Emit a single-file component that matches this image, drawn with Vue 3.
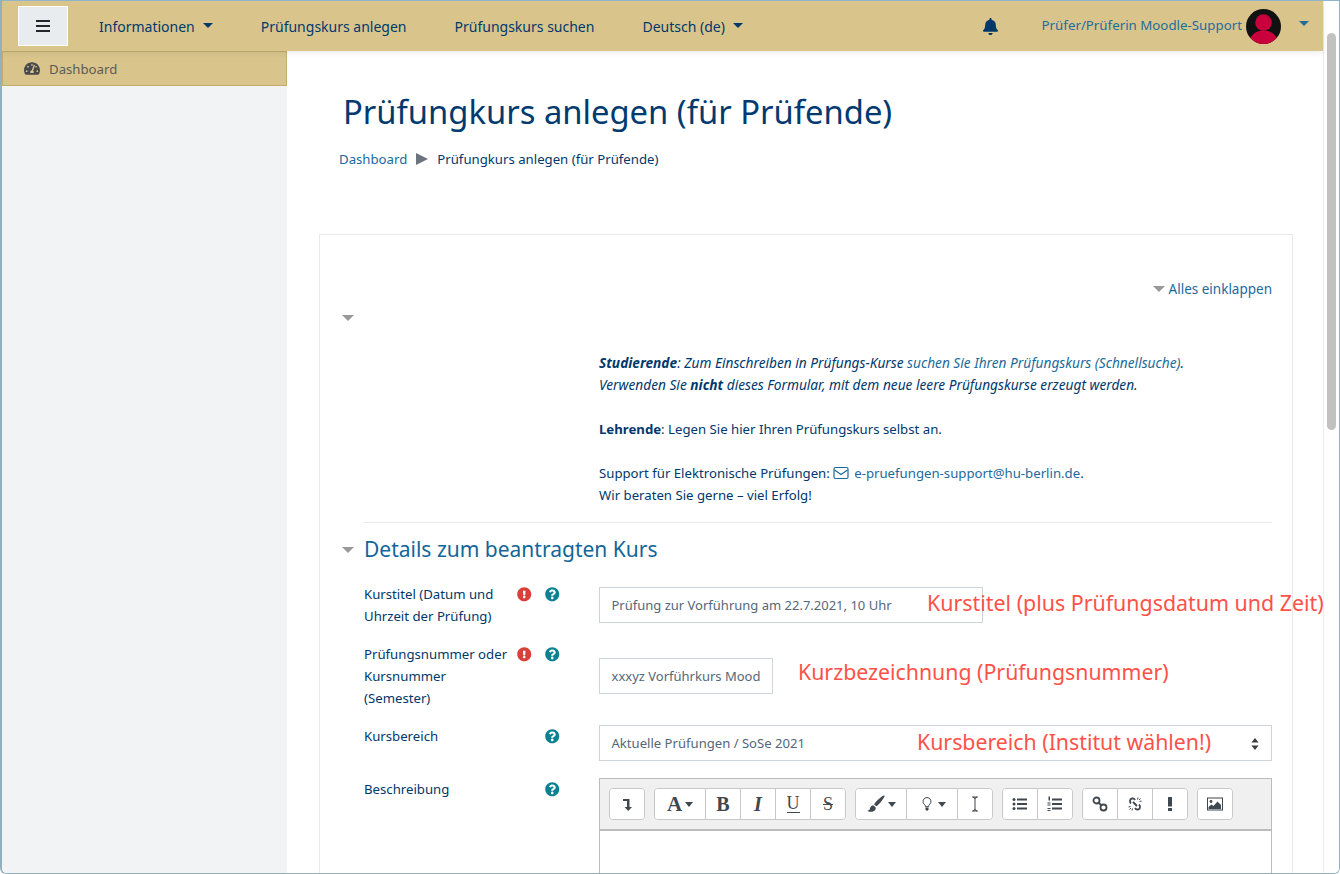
<template>
  <div class="window">
    <div class="page">
      <header class="navbar">
        <button class="burger" type="button" aria-label="Menu">
          <span></span><span></span><span></span>
        </button>
        <a class="nav-item first">Informationen<i class="caret"></i></a>
        <a class="nav-item">Prüfungskurs anlegen</a>
        <a class="nav-item">Prüfungskurs suchen</a>
        <a class="nav-item">Deutsch (de)<i class="caret"></i></a>
        <div class="nav-right">
          <svg class="bell" viewBox="0 0 448 512"><path d="M224 512c35.32 0 63.97-28.65 63.97-64H160.03c0 35.35 28.65 64 63.97 64zm215.39-149.71c-19.32-20.76-55.47-51.99-55.47-154.29 0-77.7-54.48-139.9-127.94-155.16V32c0-17.67-14.32-32-31.98-32s-31.98 14.33-31.98 32v20.84C118.56 68.1 64.08 130.3 64.08 208c0 102.3-36.15 133.53-55.47 154.29-6 6.45-8.66 14.16-8.61 21.71.11 16.4 12.98 32 32.1 32h383.8c19.12 0 32-15.6 32.1-32 .05-7.55-2.61-15.27-8.61-21.71z"/></svg>
          <a class="user-name">Prüfer/Prüferin Moodle-Support</a>
          <svg class="avatar" viewBox="0 0 36 36">
            <defs><clipPath id="av"><circle cx="18" cy="18" r="18"/></clipPath></defs>
            <circle cx="18" cy="18" r="18" fill="#111"/>
            <g clip-path="url(#av)" fill="#c8003c">
              <circle cx="18" cy="14" r="8.5"/>
              <path d="M3 36c0-8 6-14 15-14s15 6 15 14z"/>
            </g>
          </svg>
          <i class="caret user-caret"></i>
        </div>
      </header>

      <div class="content">
        <aside class="sidebar">
          <a class="side-item">
            <svg class="gauge" viewBox="0 0 576 512"><path d="M288 32C128.94 32 0 160.94 0 320c0 52.8 14.25 102.26 39.06 144.8 5.61 9.62 16.3 15.2 27.44 15.2h443c11.14 0 21.83-5.58 27.44-15.2C561.75 422.26 576 372.8 576 320c0-159.06-128.94-288-288-288zm0 64c14.71 0 26.58 10.13 30.32 23.65-1.11 2.26-2.64 4.23-3.45 6.67l-9.22 27.67c-5.13 3.49-10.97 6.01-17.64 6.01-17.67 0-32-14.33-32-32S270.33 96 288 96zM96 384c-17.67 0-32-14.33-32-32s14.33-32 32-32 32 14.33 32 32-14.33 32-32 32zm48-160c-17.67 0-32-14.33-32-32s14.33-32 32-32 32 14.33 32 32-14.33 32-32 32zm246.77-72.41l-61.33 184C343.13 347.33 352 364.54 352 384c0 11.72-3.38 22.55-8.88 32H232.88c-5.5-9.45-8.88-20.28-8.88-32 0-33.94 26.5-61.43 59.9-63.59l61.34-184.01c4.17-12.56 17.73-19.45 30.36-15.17 12.57 4.19 19.35 17.79 15.17 30.36zm14.66 57.2l15.52-46.55c3.47-1.29 7.13-2.23 11.05-2.23 17.67 0 32 14.33 32 32s-14.33 32-32 32c-11.38-.01-20.89-6.28-26.57-15.22zM480 384c-17.67 0-32-14.33-32-32s14.33-32 32-32 32 14.33 32 32-14.33 32-32 32z"/></svg>
            Dashboard
          </a>
        </aside>

        <main class="main">
          <h1>Prüfungkurs anlegen (für Prüfende)</h1>
          <nav class="breadcrumb">
            <a>Dashboard</a>
            <i class="crumb-arrow"></i>
            <span>Prüfungkurs anlegen (für Prüfende)</span>
          </nav>

          <section class="card">
            <div class="collapse-all"><i class="tri"></i><a>Alles einklappen</a></div>
            <i class="tri first-tri"></i>
            <div class="intro">
              <p><em><b>Studierende</b>: Zum Einschreiben in Prüfungs-Kurse <a>suchen Sie Ihren Prüfungskurs (Schnellsuche)</a>.<br>
                Verwenden Sie <b>nicht</b> dieses Formular, mit dem neue leere Prüfungskurse erzeugt werden.</em></p>
              <p><b>Lehrende</b>: Legen Sie hier Ihren Prüfungskurs selbst an.</p>
              <p>Support für Elektronische Prüfungen:
                <svg class="mail" viewBox="0 0 16 14"><rect x="1" y="1.5" width="14" height="11" rx="1.5"/><path d="M1.5 4l6.5 4.6L14.5 4"/></svg>
                <a>e-pruefungen-support@hu-berlin.de</a>.<br>
                Wir beraten Sie gerne – viel Erfolg!</p>
            </div>
            <hr>
            <h2><i class="tri h2-tri"></i>Details zum beantragten Kurs</h2>

            <div class="row row-title">
              <label>Kurstitel (Datum und<br>Uhrzeit der Prüfung)</label>
              <div class="marks">
                <svg class="req" viewBox="0 0 512 512"><path :d="excl"/></svg>
                <svg class="help" viewBox="0 0 512 512"><path :d="quest"/></svg>
              </div>
              <div class="field input title-input">Prüfung zur Vorführung am 22.7.2021, 10 Uhr</div>
              <span class="note note-title">Kurstitel (plus Prüfungsdatum und Zeit)</span>
            </div>

            <div class="row row-number">
              <label>Prüfungsnummer oder<br>Kursnummer<br>(Semester)</label>
              <div class="marks">
                <svg class="req" viewBox="0 0 512 512"><path :d="excl"/></svg>
                <svg class="help" viewBox="0 0 512 512"><path :d="quest"/></svg>
              </div>
              <div class="field input short-input">xxxyz Vorführkurs Mood</div>
              <span class="note note-number">Kurzbezeichnung (Prüfungsnummer)</span>
            </div>

            <div class="row row-cat">
              <label>Kursbereich</label>
              <div class="marks">
                <svg class="help" viewBox="0 0 512 512"><path :d="quest"/></svg>
              </div>
              <div class="field select">
                Aktuelle Prüfungen / SoSe 2021
                <svg class="updown" viewBox="0 0 8 12"><path d="M4 0l3.6 4.6H.4zM4 12L.4 7.4h7.2z"/></svg>
              </div>
              <span class="note note-cat">Kursbereich (Institut wählen!)</span>
            </div>

            <div class="row row-desc">
              <label>Beschreibung</label>
              <div class="marks">
                <svg class="help" viewBox="0 0 512 512"><path :d="quest"/></svg>
              </div>
              <div class="editor">
                <div class="toolbar">
                  <div class="group">
                    <button class="tb">
                      <svg viewBox="0 0 16 16"><path d="M4 3h6.500v8H13l-3.750 4L5.500 11H8V5H4z"/></svg>
                    </button>
                  </div>
                  <div class="group">
                    <button class="tb wide"><span class="serif big">A</span><i class="tb-caret"></i></button>
                    <button class="tb"><span class="serif">B</span></button>
                    <button class="tb"><span class="serif ital">I</span></button>
                    <button class="tb"><span class="serif under">U</span></button>
                    <button class="tb"><span class="serif strike">S</span></button>
                  </div>
                  <div class="group">
                    <button class="tb wide">
                      <svg class="brush" viewBox="0 0 16 16"><path d="M15.500 .5c-1-.4-2.800 1.100-5 3.100S7 7 6.300 8.400l2 1.600c1.300-.9 3.300-2.900 4.800-5s3-4 2.400-4.500zM5.500 9.200c-1.900.2-2.600 1.700-2.900 3-.2.900-.9 1.500-2.400 1.800 1.700 1.300 6 1.500 7.300-1.100.4-1 .2-1.700-.1-2.200z"/></svg>
                      <i class="tb-caret"></i>
                    </button>
                    <button class="tb wide">
                      <svg viewBox="0 0 16 16"><path class="line" d="M8 1.500a4 4 0 0 0-2.400 7.200c.6.500.8 1.100.8 2h3.200c0-.9.200-1.500.8-2A4 4 0 0 0 8 1.500z"/><path d="M6.500 11.500h3v2l-1 1.200h-1l-1-1.200z"/></svg>
                      <i class="tb-caret"></i>
                    </button>
                    <button class="tb">
                      <svg viewBox="0 0 16 16"><path class="line" d="M5 1h6M8 1.500v13M5 15h6M6 1l2 1.500L10 1M6 15l2-1.500 2 1.500"/></svg>
                    </button>
                  </div>
                  <div class="group">
                    <button class="tb">
                      <svg viewBox="0 0 16 16"><circle cx="2" cy="3.500" r="1.500"/><circle cx="2" cy="8" r="1.500"/><circle cx="2" cy="12.500" r="1.500"/><rect x="5" y="2.500" width="10" height="2"/><rect x="5" y="7" width="10" height="2"/><rect x="5" y="11.500" width="10" height="2"/></svg>
                    </button>
                    <button class="tb">
                      <svg viewBox="0 0 16 16"><rect x="1.500" y=".5" width="1.500" height="4"/><rect x=".5" y="6.500" width="3" height="1"/><rect x=".5" y="8.500" width="3" height="1"/><rect x=".5" y="12" width="3" height="1"/><rect x=".5" y="14" width="3" height="1"/><rect x="5" y="2.500" width="10" height="2"/><rect x="5" y="7" width="10" height="2"/><rect x="5" y="11.500" width="10" height="2"/></svg>
                    </button>
                  </div>
                  <div class="group">
                    <button class="tb">
                      <svg viewBox="0 0 16 16"><circle class="line thick" cx="4.500" cy="4.500" r="3"/><circle class="line thick" cx="11.500" cy="11.500" r="3"/><path class="line thick" d="M6.500 6.500l3 3"/></svg>
                    </button>
                    <button class="tb">
                      <svg viewBox="0 0 16 16"><path class="line thick" d="M4 7.500C2.500 6 2.500 3 5 2.500c1.500-.3 2.500.5 3 1.500M12 8.500c1.500 1.500 1.500 4.500-1 5-1.500.3-2.500-.5-3-1.500M6 6l4 4"/><path class="line" d="M11 1.500l-.5 2M14.500 5l-2 .5M13.500 2.500l-1.500 1.500M1.500 11l2-.5M5 14.500l.5-2M2.500 13.500L4 12"/></svg>
                    </button>
                    <button class="tb">
                      <svg viewBox="0 0 16 16"><rect x="6" y="1" width="4" height="9.500" rx=".5"/><rect x="6" y="12" width="4" height="3" rx=".5"/></svg>
                    </button>
                  </div>
                  <div class="group">
                    <button class="tb">
                      <svg viewBox="0 0 16 16"><rect class="line" x=".5" y="2" width="15" height="12"/><circle cx="4" cy="5.500" r="1.400"/><path d="M1.500 13v-2l3-2.500 2 1.500 4-4.500 3.500 3.500V13z"/></svg>
                    </button>
                  </div>
                </div>
                <div class="edit-area"></div>
              </div>
            </div>
          </section>
        </main>
      </div>
    </div>
    <div class="scrollbar"><div class="thumb"></div></div>
  </div>
</template>

<script setup>
const excl = 'M504 256c0 136.997-111.043 248-248 248S8 392.997 8 256C8 119.083 119.043 8 256 8s248 111.083 248 248zm-248 50c-25.405 0-46 20.595-46 46s20.595 46 46 46 46-20.595 46-46-20.595-46-46-46zm-43.673-165.346l7.418 136c.347 6.364 5.609 11.346 11.982 11.346h48.546c6.373 0 11.635-4.982 11.982-11.346l7.418-136c.375-6.874-5.098-12.654-11.982-12.654h-63.383c-6.884 0-12.356 5.78-11.981 12.654z'
const quest = 'M504 256c0 136.997-111.043 248-248 248S8 392.997 8 256C8 119.083 119.043 8 256 8s248 111.083 248 248zM262.655 90c-54.497 0-89.255 22.957-116.549 63.758-3.536 5.286-2.353 12.415 2.715 16.258l34.699 26.31c5.205 3.947 12.621 3.008 16.665-2.122 17.864-22.658 30.113-35.797 57.303-35.797 20.429 0 45.698 13.148 45.698 32.958 0 14.976-12.363 22.667-32.534 33.976C247.128 238.528 216 254.941 216 296v4c0 6.627 5.373 12 12 12h56c6.627 0 12-5.373 12-12v-1.333c0-28.462 83.186-29.647 83.186-106.667 0-58.002-60.165-102-116.531-102zM256 338c-25.365 0-46 20.635-46 46 0 25.364 20.635 46 46 46s46-20.636 46-46c0-25.365-20.635-46-46-46z'
</script>

<style>
html, body { margin: 0; overflow: hidden; background: #fff; }
</style>

<style scoped>
.window { box-sizing: border-box; width: 1340px; height: 874px; display: flex; overflow: hidden; background: #fff; border: 1px solid #92b1bd; border-left-width: 2px; border-top-color: #8fb4cc; border-radius: 0 0 6px 6px; font-family: "Noto Sans", "Lato", sans-serif; font-size: 13.2px; line-height: 22px; color: #00386c; }
.page { flex: 1; min-width: 0; display: flex; flex-direction: column; }
a { color: #1b6a9c; }

.navbar { height: 50px; flex: none; display: flex; align-items: center; background: #d9c58c; box-shadow: 0 2px 6px rgba(0,0,0,0.08); position: relative; z-index: 2; font-size: 14px; }
.burger { box-sizing: border-box; width: 50px; height: 40px; margin-left: 16px; background: #e9ecef; border: 1px solid #fff; display: flex; flex-direction: column; align-items: center; justify-content: center; gap: 2.5px; padding: 0; }
.burger span { width: 14px; height: 2.500px; background: #23272b; }
.nav-item { color: #00386c; margin-left: 48px; margin-top: 1px; display: flex; align-items: center; }
.nav-item.first { margin-left: 31px; }
.caret { display: inline-block; width: 0; height: 0; border-left: 5px solid transparent; border-right: 5px solid transparent; border-top: 5px solid #00386c; margin-left: 8px; margin-top: -3px; }
.nav-right { margin-left: auto; display: flex; align-items: center; }
.bell { width: 15px; height: 17px; fill: #00386c; margin-right: 44px; margin-top: 1px; }
.user-name { color: #1f6c9e; margin-right: 4px; margin-top: -2px; font-size: 13.3px; }
.avatar { width: 35px; height: 35px; margin-top: 1px; }
.user-caret { border-top-color: #1f6c9e; margin-left: 18px; margin-right: 14px; margin-top: -6px; }

.content { flex: 1; min-height: 0; display: flex; }
.sidebar { width: 285px; flex: none; background: #f2f3f5; }
.side-item { box-sizing: border-box; height: 35px; display: flex; align-items: center; gap: 9px; padding-left: 21px; background: #d9c58c; border: 1px solid #c2ad6f; color: #5b5b5b; }
.gauge { width: 16px; height: 15px; fill: #47494b; }

.main { flex: 1; min-width: 0; padding: 0 30px 0 32px; }
h1 { margin: 39px 0 0 24px; font-size: 32.75px; line-height: 44px; font-weight: 400; color: #003a70; }
.breadcrumb { display: flex; align-items: center; margin: 14px 0 0 20px; }
.crumb-arrow { width: 0; height: 0; border-left: 12px solid #6c757d; border-top: 6px solid transparent; border-bottom: 6px solid transparent; margin: 0 9px 0 9px; }

.card { box-sizing: border-box; margin-top: 64px; height: 800px; border: 1px solid #e8e8e8; padding: 43px 20px 0 22px; position: relative; }
.collapse-all { display: flex; align-items: center; justify-content: flex-end; gap: 4px; height: 22px; font-size: 13.5px; }
.tri { display: inline-block; width: 0; height: 0; border-left: 6.5px solid transparent; border-right: 6.5px solid transparent; border-top: 6.5px solid #999; }
.first-tri { display: block; margin-top: 15px; margin-bottom: 0; }
.intro { margin: 31px 0 0 257px; }
.intro p { margin: 0 0 22px; }
.intro p:last-child { margin: 0; }
.intro em { font-size: 13.7px; }
.intro em b, .intro b { font-weight: 700; }
.mail { width: 16px; height: 14px; vertical-align: -2px; fill: none; stroke: #1b6a9c; stroke-width: 1.2; margin: 0 5px 0 0; }
hr { margin: 16px 0 0 22px; border: 0; border-top: 1px solid #e6e9ec; }
h2 { margin: 13px 0 0; font-size: 21px; line-height: 26px; font-weight: 400; color: #11669a; display: flex; align-items: center; }
.h2-tri { margin-right: 10px; margin-top: 1px; }

.row { display: grid; grid-template-columns: 153px 82px 1fr; margin-left: 22px; position: relative; }
.row-title { margin-top: 21px; }
.row-number { margin-top: 16px; }
.row-cat { margin-top: 16px; }
.row-desc { margin-top: 17px; }
label { display: block; }
.marks { display: flex; align-items: flex-start; padding-top: 4px; }
.req { width: 14.5px; height: 14.5px; fill: #d9403a; margin-right: 13.5px; }
.help { width: 14.5px; height: 14.5px; fill: #0c8192; margin-left: 28px; }
.req + .help { margin-left: 0; }
.field { box-sizing: border-box; height: 36px; border: 1px solid #ced4da; color: #55677a; display: flex; align-items: center; padding-left: 11.5px; font-size: 13px; white-space: nowrap; overflow: hidden; }
.title-input { width: 384px; margin-top: 4px; }
.short-input { width: 174px; margin-top: 15px; }
.select { position: relative; font-size: 13.1px; }
.updown { position: absolute; right: 12px; top: 12px; width: 8px; height: 12px; fill: #3a3f44; }

.note { position: absolute; color: #ff5148; font-size: 21.3px; line-height: 30px; white-space: nowrap; z-index: 3; }
.note-title { left: 563px; top: 5px; font-size: 21.4px; }
.note-number { left: 434px; top: 14px; }
.note-cat { left: 553px; top: 2px; }

.editor { border: 1px solid #bbb; border-bottom: 0; }
.toolbar { background: #f0f0f0; border-bottom: 2px solid #bbb; display: flex; align-items: flex-start; gap: 9px; padding: 9px 0 0 9px; box-sizing: border-box; height: 52px; }
.group { display: flex; height: 32px; border: 1px solid #c8c8c8; border-radius: 4px; background: #fff; overflow: hidden; box-sizing: border-box; }
.tb { box-sizing: border-box; width: 35px; height: 30px; padding: 0; background: #fff; border: 0; border-left: 1px solid #c8c8c8; display: flex; align-items: center; justify-content: center; gap: 3px; color: #3f474f; }
.tb:first-child { border-left: 0; width: 34px; }
.tb.wide { width: 51px; }
.tb.wide:first-child { width: 50px; }
.tb svg { width: 16px; height: 16px; fill: #3f474f; }
.tb .line { fill: none; stroke: #3f474f; stroke-width: 1; }
.tb .thick { stroke-width: 1.8; }
.tb svg.brush { width: 18px; height: 18px; }
.serif { font-family: "Liberation Serif", serif; font-weight: 700; font-size: 20px; line-height: 20px; }
.serif.big { font-size: 21px; }
.serif.ital { font-style: italic; }
.serif.under { font-size: 18px; font-weight: 400; border-bottom: 1.500px solid #3f474f; line-height: 17px; }
.serif.strike { font-size: 18px; font-weight: 400; text-decoration: line-through; }
.tb-caret { width: 0; height: 0; border-left: 4.500px solid transparent; border-right: 4.500px solid transparent; border-top: 5px solid #3f474f; }
.edit-area { height: 120px; background: #fff; }

.scrollbar { width: 15px; flex: none; background: #fff; border-left: 1px solid #ececec; position: relative; }
.thumb { position: absolute; left: 3px; top: 32px; width: 9px; height: 397px; background: #c1c1c1; border-radius: 5px; }
</style>
